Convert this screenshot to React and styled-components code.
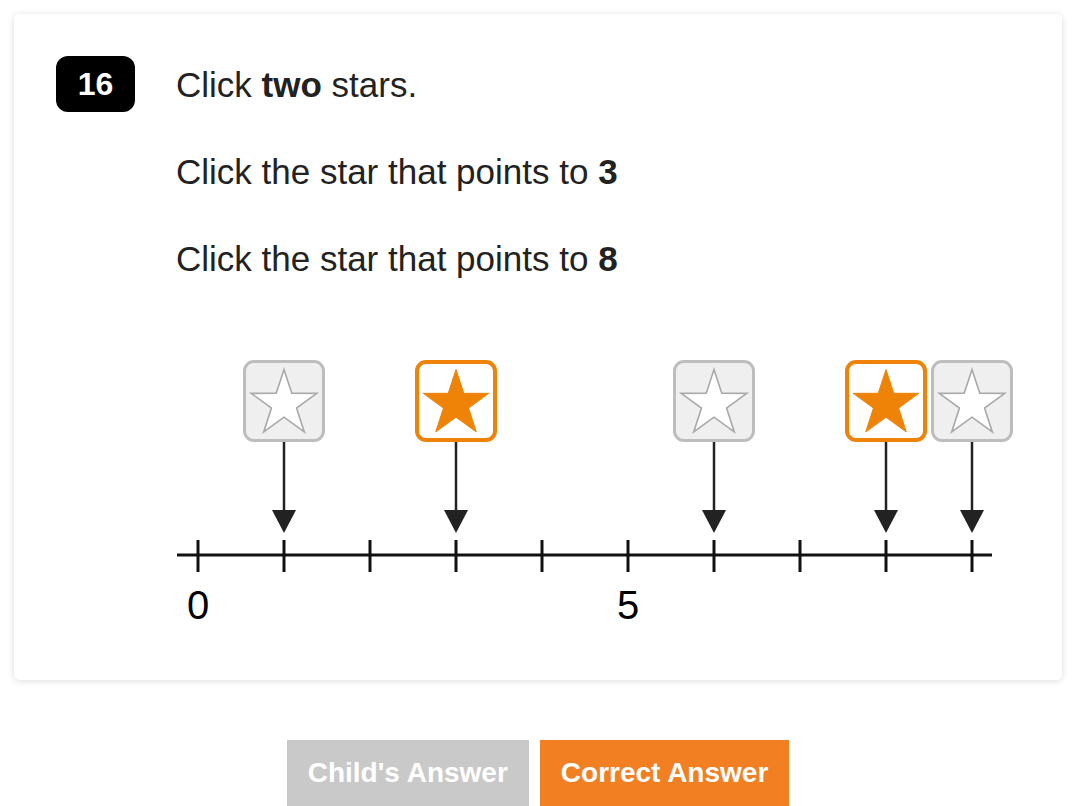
import React from "react";
import styled, { createGlobalStyle } from "styled-components";

const GlobalStyle = createGlobalStyle`
  html, body {
    margin: 0;
    padding: 0;
    background: #ffffff;
  }
  body {
    font-family: "Liberation Sans", Arial, Helvetica, sans-serif;
    color: #222222;
    overflow: hidden;
  }
`;

const TICK_START = 142;
const TICK_STEP = 86;
const TICK_COUNT = 10;
const tickX = (i) => TICK_START + TICK_STEP * i;

const stars = [
  { at: 1, selected: false },
  { at: 3, selected: true },
  { at: 6, selected: false },
  { at: 8, selected: true },
  { at: 9, selected: false },
];

const labels = [
  { at: 0, text: "0" },
  { at: 5, text: "5" },
];

const STAR_POINTS =
  "0,-31.5 7.76,-7.68 32.81,-7.66 12.55,7.08 20.28,30.91 0,16.2 -20.28,30.91 -12.55,7.08 -32.81,-7.66 -7.76,-7.68";

const Page = styled.div`
  width: 1076px;
  height: 806px;
  overflow: hidden;
  display: flex;
  flex-direction: column;
  align-items: center;
`;

const Card = styled.section`
  box-sizing: border-box;
  width: 1048px;
  height: 666px;
  margin-top: 14px;
  padding: 42px 42px 0;
  background: #ffffff;
  border-radius: 5px;
  box-shadow: 0 1px 7px rgba(0, 0, 0, 0.14);
`;

const Header = styled.div`
  display: flex;
  gap: 41px;
  align-items: flex-start;
`;

const Badge = styled.div`
  flex: none;
  width: 79px;
  height: 56px;
  border-radius: 12px;
  background: #000000;
  color: #ffffff;
  font-weight: 700;
  font-size: 32px;
  display: flex;
  align-items: center;
  justify-content: center;
`;

const Prompts = styled.div`
  display: flex;
  flex-direction: column;
  gap: 30px;
`;

const Prompt = styled.p`
  margin: 0;
  padding-top: 1px;
  font-size: 35px;
  line-height: 56px;
  color: #222222;

  b {
    font-weight: 700;
  }
`;

const Diagram = styled.div`
  position: relative;
  margin-top: 73px;
  height: 264px;
`;

const Lines = styled.svg`
  position: absolute;
  left: 0;
  top: 0;
`;

const StarButton = styled.button`
  position: absolute;
  top: 0;
  box-sizing: border-box;
  width: 82px;
  height: 82px;
  padding: 0;
  border-radius: 11px;
  border: ${({ $selected }) => ($selected ? "4px solid #ef8307" : "3px solid #bdbdbd")};
  background: ${({ $selected }) => ($selected ? "#ffffff" : "#efefef")};
  display: flex;
  align-items: center;
  justify-content: center;
  cursor: pointer;
`;

const Label = styled.span`
  position: absolute;
  top: 225px;
  transform: translateX(-50%);
  font-size: 40px;
  line-height: 40px;
  color: #000000;
`;

const Actions = styled.div`
  display: flex;
  gap: 11px;
  margin-top: 60px;
`;

const ActionButton = styled.button`
  height: 66px;
  padding: 0 21px;
  border: none;
  font-family: "Liberation Sans", Arial, sans-serif;
  font-weight: 700;
  font-size: 28px;
  color: #ffffff;
  background: ${({ $primary }) => ($primary ? "#f27f22" : "#c9c9c9")};
  cursor: pointer;
`;

const Star = ({ selected }) => (
  <svg width="72" height="72" viewBox="-36 -36 72 72">
    <polygon
      points={STAR_POINTS}
      fill={selected ? "#ef8307" : "#ffffff"}
      stroke={selected ? "#ef8307" : "#a9a9a9"}
      strokeWidth={selected ? 1 : 1.6}
      strokeLinejoin="miter"
    />
  </svg>
);

const NumberLine = () => (
  <Diagram>
    <Lines width="964" height="264">
      <line x1="121" y1="195" x2="936" y2="195" stroke="#111" strokeWidth="3" />
      {Array.from({ length: TICK_COUNT }, (_, i) => (
        <line
          key={i}
          x1={tickX(i)}
          y1="180"
          x2={tickX(i)}
          y2="212"
          stroke="#111"
          strokeWidth="3"
        />
      ))}
      {stars.map((s) => (
        <g key={s.at}>
          <line
            x1={tickX(s.at)}
            y1="82"
            x2={tickX(s.at)}
            y2="152"
            stroke="#222"
            strokeWidth="2.5"
          />
          <polygon
            points={`${tickX(s.at) - 12},150 ${tickX(s.at) + 12},150 ${tickX(s.at)},173`}
            fill="#222"
          />
        </g>
      ))}
    </Lines>
    {stars.map((s) => (
      <StarButton
        key={s.at}
        $selected={s.selected}
        style={{ left: tickX(s.at) - 41 }}
        aria-label={`Star pointing to ${s.at}`}
      >
        <Star selected={s.selected} />
      </StarButton>
    ))}
    {labels.map((l) => (
      <Label key={l.at} style={{ left: tickX(l.at) }}>
        {l.text}
      </Label>
    ))}
  </Diagram>
);

export default function App() {
  return (
    <Page>
      <GlobalStyle />
      <Card>
        <Header>
          <Badge>16</Badge>
          <Prompts>
            <Prompt>
              Click <b>two</b> stars.
            </Prompt>
            <Prompt>
              Click the star that points to <b>3</b>
            </Prompt>
            <Prompt>
              Click the star that points to <b>8</b>
            </Prompt>
          </Prompts>
        </Header>
        <NumberLine />
      </Card>
      <Actions>
        <ActionButton>Child's Answer</ActionButton>
        <ActionButton $primary>Correct Answer</ActionButton>
      </Actions>
    </Page>
  );
}
